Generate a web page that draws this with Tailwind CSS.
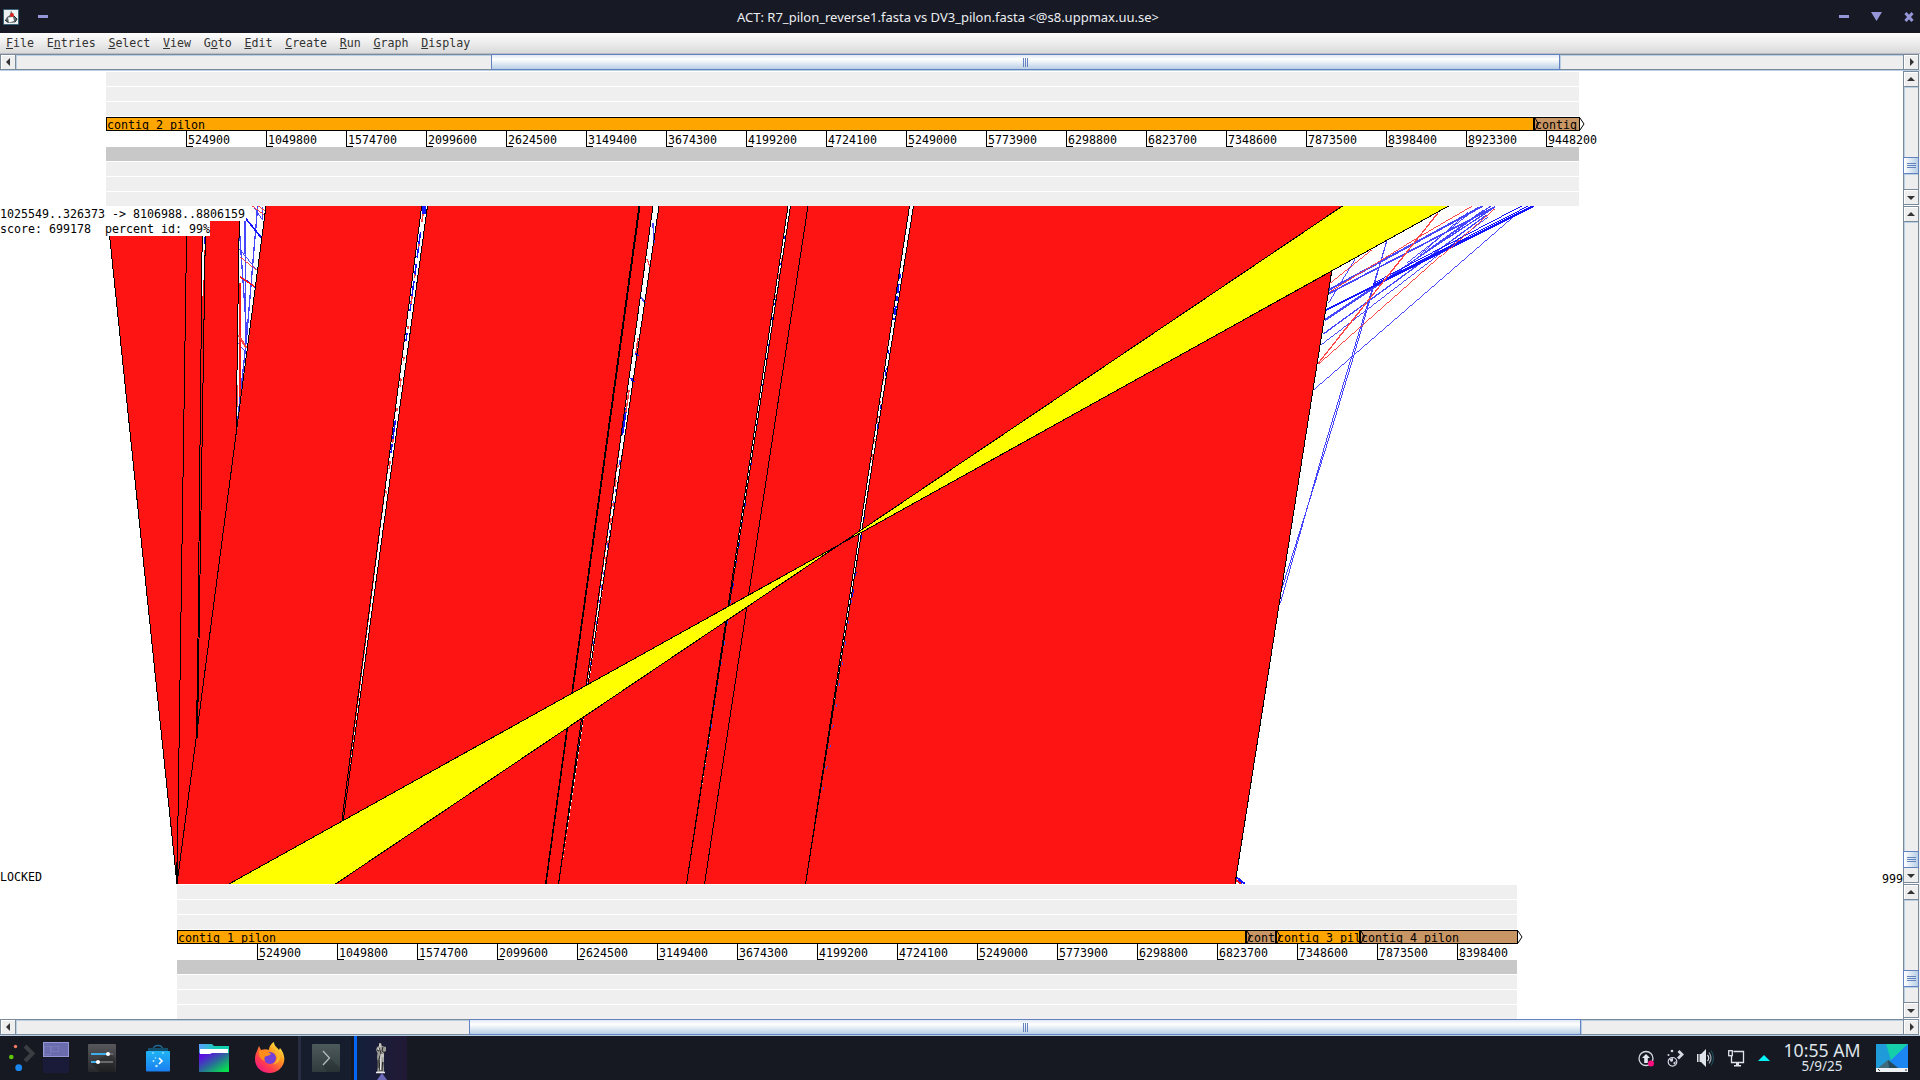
<!DOCTYPE html>
<html lang="en">
<head>
<meta charset="utf-8">
<title>ACT</title>
<script src="https://cdn.jsdelivr.net/npm/@tailwindcss/browser@4"></script>
</head>
<body class="w-[1920px] h-[1080px] overflow-hidden flex flex-col bg-white text-black font-['DejaVu_Sans_Mono',monospace] text-[11.63px] leading-[14px]">

<!-- title bar -->
<header class="h-[33px] shrink-0 bg-[#171924] flex items-center relative">
  <svg class="ml-[3px] w-4 h-4" viewBox="0 0 16 16"><rect width="16" height="16" rx="1" fill="#3b6477"/><rect x="1" y="1" width="14" height="14" fill="#edf1f2"/><path d="M8 1.500l2 4 3 3.500 1.500 1-2.500 3.500-7 .5-3-2.500 2-3.500 3-2z" fill="#5b686c"/><path d="M5 8.500l5-.5 1 4-5 1.500z" fill="#fff"/><path d="M11 7l3 3-2 3M2 11l3 2" stroke="#222b2e" fill="none"/><circle cx="9" cy="6" r="1.900" fill="#e0231d"/></svg>
  <div class="ml-[19px] w-[10px] h-[3px] bg-[#9496d8]"></div>
  <h1 class="absolute left-[736px] w-[424px] text-center whitespace-nowrap text-[13px] leading-[18px] top-[8px] text-[#eceef2] font-['Noto_Sans',sans-serif]">ACT: R7_pilon_reverse1.fasta vs DV3_pilon.fasta &lt;@s8.uppmax.uu.se&gt;</h1>
  <div class="ml-auto mr-[6px] flex items-center gap-[22px]">
    <div class="w-[10px] h-[3px] bg-[#9496d8]"></div>
    <svg class="w-[11px] h-[9px]" viewBox="0 0 11 9"><path d="M0 0h11l-5.500 9z" fill="#9496d8"/></svg>
    <svg class="w-[10px] h-[10px]" viewBox="0 0 10 10"><path d="M1.500 1l7 8M8.500 1l-7 8" stroke="#9496d8" stroke-width="3"/></svg>
  </div>
</header>

<!-- menu bar -->
<nav class="h-[21px] shrink-0 border-b border-[#b8bcc4] bg-gradient-to-b from-white to-[#dadada] text-[#333] flex items-center gap-[12.7px] pl-[6px] pb-px">
  <span><u>F</u>ile</span><span>E<u>n</u>tries</span><span><u>S</u>elect</span><span><u>V</u>iew</span><span>G<u>o</u>to</span><span><u>E</u>dit</span><span><u>C</u>reate</span><span><u>R</u>un</span><span><u>G</u>raph</span><span><u>D</u>isplay</span>
</nav>

<!-- upper horizontal scrollbar -->
<div class="h-[17px] shrink-0 flex border-b border-[#b8cfe5] bg-[#eee]">
  <div class="w-4 border border-[#7a8a99] flex items-center justify-center shadow-[inset_1px_1px_#fff]"><svg class="w-1 h-2" viewBox="0 0 4 8"><path d="M4 0v8L0 4z" fill="#333"/></svg></div>
  <div class="w-[475px] border-y border-[#7a8a99] shadow-[inset_1px_1px_#b8cfe5]"></div>
  <div class="w-[1069px] border border-[#6382bf] bg-gradient-to-b from-[#dfe9f3] via-white via-30% to-[#b8cfe5] flex items-center justify-center gap-px">
    <i class="w-px h-[9px] bg-[#6382bf]"></i><i class="w-px h-[9px] bg-[#6382bf]"></i><i class="w-px h-[9px] bg-[#6382bf]"></i>
  </div>
  <div class="w-[343px] border-y border-[#7a8a99] shadow-[inset_1px_1px_#b8cfe5]"></div>
  <div class="w-4 border border-[#7a8a99] flex items-center justify-center pl-px shadow-[inset_1px_1px_#fff]"><svg class="w-1 h-2" viewBox="0 0 4 8"><path d="M0 0v8l4-4z" fill="#333"/></svg></div>
</div>

<!-- subject sequence -->
<section class="h-[135px] shrink-0 flex">
  <div class="w-[1903px] pt-px pl-[106px]">
    <div class="w-[1473px]">
      <div class="h-[14px] mb-px bg-[#efefef]"></div>
      <div class="h-[14px] mb-px bg-[#efefef]"></div>
      <div class="h-[14px] mb-px bg-[#efefef]"></div>
      <div class="h-[14px] w-[1480px] flex">
        <div class="w-[1429px] border border-r-2 border-black bg-[#ffa500] overflow-hidden leading-[15px] whitespace-pre">contig 2 pilon</div>
        <div class="w-[45px] border border-l-0 border-black bg-[#c89664] overflow-hidden leading-[15px] relative whitespace-pre">contig<svg class="absolute left-0 top-0 w-[4px] h-3" viewBox="0 0 4 12"><path d="M0 0l3.500 6L0 12" fill="none" stroke="#000"/></svg></div>
        <svg class="w-[6px] h-[14px]" viewBox="0 0 6 14"><path d="M0 1l4 6-4 6" fill="none" stroke="#000"/></svg>
      </div>
      <div class="h-4 flex pl-[80px]" data-ruler="18"></div>
      <div class="h-[14px] mb-px bg-[#c8c8c8]"></div>
      <div class="h-[14px] mb-px bg-[#efefef]"></div>
      <div class="h-[14px] mb-px bg-[#efefef]"></div>
      <div class="h-[14px] bg-[#efefef]"></div>
    </div>
  </div>
  <div class="w-[17px] bg-[#eee] border-l border-[#7a8a99] pr-px flex flex-col">
    <div class="h-4 border-y border-r border-[#7a8a99] flex items-center justify-center shadow-[inset_1px_1px_#fff]"><svg class="w-2 h-1" viewBox="0 0 8 4"><path d="M4 0l4 4H0z" fill="#333"/></svg></div>
    <div class="h-[70px] border-r border-[#7a8a99] shadow-[inset_1px_1px_#b8cfe5]"></div>
    <div class="h-[17px] -ml-px border border-[#6382bf] bg-gradient-to-r from-white to-[#b8cfe5] flex flex-col items-center justify-center gap-px"><i class="w-[9px] h-px bg-[#6382bf]"></i><i class="w-[9px] h-px bg-[#6382bf]"></i><i class="w-[9px] h-px bg-[#6382bf]"></i></div>
    <div class="h-[15px] border-r border-[#7a8a99] shadow-[inset_1px_1px_#b8cfe5]"></div>
    <div class="h-4 pt-[2px] border-y border-r border-[#7a8a99] flex items-center justify-center shadow-[inset_1px_1px_#fff]"><svg class="w-2 h-1" viewBox="0 0 8 4"><path d="M0 0h8L4 4z" fill="#333"/></svg></div>
    <div class="h-px bg-white"></div>
  </div>
</section>

<!-- comparison view -->
<section class="h-[678px] shrink-0 flex">
  <div class="w-[1903px] relative">
    <svg class="w-[1903px] h-[678px] block" viewBox="0 206 1903 678" shape-rendering="crispEdges" fill="none">
      <!-- short matches to the right -->
      <g transform="translate(1220 200) scale(.33333)" stroke="#4646ff" stroke-width="3">
        <path d="M788 18L326 270" stroke-width="6"/><path d="M825 20L328 280" stroke-width="5"/>
        <path d="M822 22L315 358M812 18L520 225L315 362" stroke-width="3.500"/><path d="M800 45L310 402" stroke-width="4"/>
        <path d="M745 35L600 165M775 20L560 190M790 30L610 160M805 50L303 435M875 55L283 568M405 178L325 310M825 22L690 110L560 195"/>
        <path d="M500 124L398 460L315 735L181 1210M500 124L402 465L319 740L186 1165"/>
        <path d="M940 18L318 330" stroke="#1414ff" stroke-width="6"/>
        <path d="M925 18L460 255M905 18L700 125L460 250" stroke="#1414ff"/>
        <path d="M757 18L590 115L330 275M824 24L296 492M455 150L330 250" stroke="#ff4646"/>
        <path d="M653 40L293 492" stroke="#ff4646" stroke-width="4"/>
      </g>
      <path d="M1236 877l9 7M1236 880l6 4" stroke="#1414ff" stroke-width="2"/><path d="M1236 880l5 4" stroke="#ff1414" stroke-width="2"/>
      <path d="M106.500 206H1342L1235 884H177z" fill="#ff1414"/>
      <!-- wedge with inverted repeats -->
      <clipPath id="wedge"><path d="M239.500 206H266L236 437z"/></clipPath>
      <g clip-path="url(#wedge)"><path d="M230 206h40v240h-40z" fill="#fff"/>
        <g transform="translate(90 200) scale(.33333)" stroke="#4646ff" stroke-width="4">
          <path d="M465 50L467 460M503 18L470 410L440 690M449 100L470 400"/>
          <path d="M490 18L518 60M518 20V60M449 148L500 210M445 430L470 460" stroke-width="3"/>
          <path d="M463 50L517 117" stroke="#1414ff" stroke-width="5"/>
          <path d="M470 240L500 268M440 610V700" stroke="#1414ff"/>
          <path d="M449 170L502 212M487 18L527 48M505 18L527 34" stroke="#ff4646" stroke-width="3"/>
          <path d="M449 230L497 262M450 250V590" stroke="#ff1414" stroke-width="4"/>
          <path d="M445 405L470 445M442 555V620" stroke="#ff4646" stroke-width="6"/>
        </g>
      </g>
      <!-- gaps between collinear blocks -->
      <g fill="#fff">
        <path d="M203 206h3l-3 90h-1z"/><path d="M421.700 206h5.600L342.500 826z"/><path d="M653.300 206h5.700L563 860z"/><path d="M788 206h2.600L700 800z"/><path d="M909.700 206h4L822 780z"/>
      </g>
      <path d="M204.500 237v7M204.500 270v4M204.500 298v12" stroke="#1414ff" stroke-width="1"/><path d="M204.500 254v3M204.500 275v15" stroke="#ff4646"/>
      <g stroke="#4646ff" stroke-width="1.500">
        <path d="M424 206v8" stroke="#1414ff" stroke-width="4"/>
        <path d="M424 206L391 453" stroke="#1414ff" stroke-width="1.500" stroke-dasharray="10 16 26 6 14 4 30 22 8 80 20 4"/>
        <path d="M653 223l1 20M641 297l4 6"/><path d="M636 353l2 3M631 378l3 4M626 408L622 435" stroke="#1414ff" stroke-width="2.500"/>
        <path d="M620 460L600 600" stroke-dasharray="5 24 3 10"/>
        <path d="M785 236L731 600" stroke="#1414ff" stroke-width="1" stroke-dasharray="3 20 6 12"/>
        <path d="M900 274L894 320" stroke="#1414ff" stroke-dasharray="5 5 9 3" stroke-width="2"/><path d="M889 350L852 600" stroke="#1414ff" stroke-width="1" stroke-dasharray="4 14 8 30"/>
        <path d="M600 600L570 806M731 600L703 780M852 600L822 800" stroke-width="1" stroke-dasharray="3 18"/>
      </g>
      <g stroke="#ff4646" stroke-width="1.500">
        <path d="M423 214L385 500" stroke-dasharray="8 22 3 28 4 18"/><path d="M647 259l3 8M638 338l-2 15M629 390L626 412"/><path d="M618 465L602 590M782 258L775 300M891 326L887 350L872 460" stroke-dasharray="3 12 7 16"/>
      </g>
      <!-- block outlines -->
      <g stroke="#000" stroke-width="1">
        <path d="M106.500 206L177 884M187 206L177 884M202.500 206L197 735M205.800 206L197.500 735M239.500 206L236 437M266 206L177 884"/>
        <path d="M421.700 206L342 820M427.500 206L342.500 826M639 206L545.500 884M640 206L546 884M653 206L558.500 884M659 206L558.500 884M788 206L686.500 884M790.500 206L686.500 884M808 206L704.500 884M909.500 206L805.500 884M913.500 206L805.500 884"/>
        <path d="M1342 206L1235 884"/>
        <path d="M197 700v38M177 862v20" stroke-width="2"/>
      </g>
      <!-- selected match -->
      <path d="M1342.500 206H1448.500L229 884H335.500z" fill="#ff0"/>
      <path d="M1342.500 206L335.500 884M1448.500 206L229 884" stroke="#000"/>
    </svg>
    <div class="absolute left-0 top-0 h-[15px] w-[246px] bg-white whitespace-pre leading-[17px]">1025549..326373 -&gt; 8106988..8806159</div>
    <div class="absolute left-0 top-[15px] h-[15px] w-[210px] bg-white whitespace-pre leading-[17px]">score: 699178  percent id: 99%</div>
    <div class="absolute left-0 -bottom-px leading-[15px]">LOCKED</div>
    <div class="absolute right-0 -bottom-[3px] leading-[15px]">999</div>
  </div>
  <div class="w-[17px] bg-[#eee] border-l border-[#7a8a99] pr-px flex flex-col">
    <div class="h-4 border-y border-r border-[#7a8a99] flex items-center justify-center shadow-[inset_1px_1px_#fff]"><svg class="w-2 h-1" viewBox="0 0 8 4"><path d="M4 0l4 4H0z" fill="#333"/></svg></div>
    <div class="h-[629px] border-r border-[#7a8a99] shadow-[inset_1px_1px_#b8cfe5]"></div>
    <div class="h-[17px] -ml-px border border-[#6382bf] bg-gradient-to-r from-white to-[#b8cfe5] flex flex-col items-center justify-center gap-px"><i class="w-[9px] h-px bg-[#6382bf]"></i><i class="w-[9px] h-px bg-[#6382bf]"></i><i class="w-[9px] h-px bg-[#6382bf]"></i></div>
    <div class="h-[15px] pt-[2px] border-b border-r border-[#7a8a99] flex items-center justify-center"><svg class="w-2 h-1" viewBox="0 0 8 4"><path d="M0 0h8L4 4z" fill="#333"/></svg></div>
    <div class="h-px bg-white"></div>
  </div>
</section>

<!-- query sequence -->
<section class="h-[135px] shrink-0 flex">
  <div class="w-[1903px] pt-px pl-[177px]">
    <div class="w-[1340px]">
      <div class="h-[14px] mb-px bg-[#efefef]"></div>
      <div class="h-[14px] mb-px bg-[#efefef]"></div>
      <div class="h-[14px] mb-px bg-[#efefef]"></div>
      <div class="h-[14px] w-[1350px] flex">
        <div class="w-[1070px] border border-r-2 border-black bg-[#ffa500] overflow-hidden leading-[15px] whitespace-pre">contig 1 pilon</div>
        <div class="w-[30px] border border-r-2 border-l-0 border-black bg-[#c89664] overflow-hidden leading-[15px] relative whitespace-pre">cont<svg class="absolute left-0 top-0 w-[4px] h-3" viewBox="0 0 4 12"><path d="M0 0l3.500 6L0 12" fill="none" stroke="#000"/></svg></div>
        <div class="w-[84px] border border-r-2 border-l-0 border-black bg-[#ffa500] overflow-hidden leading-[15px] relative whitespace-pre">contig 3 pil<svg class="absolute left-0 top-0 w-[4px] h-3" viewBox="0 0 4 12"><path d="M0 0l3.500 6L0 12" fill="none" stroke="#000"/></svg></div>
        <div class="w-[157px] border border-l-0 border-black bg-[#c89664] overflow-hidden leading-[15px] relative whitespace-pre">contig 4 pilon<svg class="absolute left-0 top-0 w-[4px] h-3" viewBox="0 0 4 12"><path d="M0 0l3.500 6L0 12" fill="none" stroke="#000"/></svg></div>
        <svg class="w-[6px] h-[14px]" viewBox="0 0 6 14"><path d="M0 1l4 6-4 6" fill="none" stroke="#000"/></svg>
      </div>
      <div class="h-4 flex pl-[80px]" data-ruler="16"></div>
      <div class="h-[14px] mb-px bg-[#c8c8c8]"></div>
      <div class="h-[14px] mb-px bg-[#efefef]"></div>
      <div class="h-[14px] mb-px bg-[#efefef]"></div>
      <div class="h-[14px] bg-[#efefef]"></div>
    </div>
  </div>
  <div class="w-[17px] bg-[#eee] border-l border-[#7a8a99] pr-px flex flex-col">
    <div class="h-4 border-y border-r border-[#7a8a99] flex items-center justify-center shadow-[inset_1px_1px_#fff]"><svg class="w-2 h-1" viewBox="0 0 8 4"><path d="M4 0l4 4H0z" fill="#333"/></svg></div>
    <div class="h-[70px] border-r border-[#7a8a99] shadow-[inset_1px_1px_#b8cfe5]"></div>
    <div class="h-[17px] -ml-px border border-[#6382bf] bg-gradient-to-r from-white to-[#b8cfe5] flex flex-col items-center justify-center gap-px"><i class="w-[9px] h-px bg-[#6382bf]"></i><i class="w-[9px] h-px bg-[#6382bf]"></i><i class="w-[9px] h-px bg-[#6382bf]"></i></div>
    <div class="h-[15px] border-r border-[#7a8a99] shadow-[inset_1px_1px_#b8cfe5]"></div>
    <div class="h-4 pt-[2px] border-y border-r border-[#7a8a99] flex items-center justify-center shadow-[inset_1px_1px_#fff]"><svg class="w-2 h-1" viewBox="0 0 8 4"><path d="M0 0h8L4 4z" fill="#333"/></svg></div>
    <div class="h-px bg-white"></div>
  </div>
</section>

<!-- lower horizontal scrollbar -->
<div class="h-[17px] shrink-0 flex border-b border-[#b8cfe5] bg-[#eee]">
  <div class="w-4 border border-[#7a8a99] flex items-center justify-center shadow-[inset_1px_1px_#fff]"><svg class="w-1 h-2" viewBox="0 0 4 8"><path d="M4 0v8L0 4z" fill="#333"/></svg></div>
  <div class="w-[453px] border-y border-[#7a8a99] shadow-[inset_1px_1px_#b8cfe5]"></div>
  <div class="w-[1112px] border border-[#6382bf] bg-gradient-to-b from-[#dfe9f3] via-white via-30% to-[#b8cfe5] flex items-center justify-center gap-px">
    <i class="w-px h-[9px] bg-[#6382bf]"></i><i class="w-px h-[9px] bg-[#6382bf]"></i><i class="w-px h-[9px] bg-[#6382bf]"></i>
  </div>
  <div class="w-[322px] border-y border-[#7a8a99] shadow-[inset_1px_1px_#b8cfe5]"></div>
  <div class="w-4 border border-[#7a8a99] flex items-center justify-center pl-px shadow-[inset_1px_1px_#fff]"><svg class="w-1 h-2" viewBox="0 0 4 8"><path d="M0 0v8l4-4z" fill="#333"/></svg></div>
</div>

<!-- desktop panel -->
<footer class="h-[44px] shrink-0 bg-[#161922] flex items-stretch font-['Noto_Sans',sans-serif]">
  <svg class="w-[43px] h-[44px]" viewBox="0 0 43 44"><circle cx="15.500" cy="10.500" r="1.700" fill="#f27a62"/><circle cx="11.300" cy="21" r="2.300" fill="#5fc60a"/><circle cx="18.700" cy="31.700" r="3.400" fill="#1a86f0"/><path d="M25 10l7.500 7.500L25 25" fill="none" stroke="#3a3d42" stroke-width="4"/></svg>
  <div class="w-[26px] flex flex-col pt-[6px]">
    <div class="h-[15px] bg-[#6a6cae] border border-[#9496d8] flex"><div class="w-[7px] h-[9px] mt-[3px] border border-[#7779b9]"></div><div class="w-[8px] h-[6px] mt-[3px] border border-[#7779b9]"></div></div>
    <div class="h-[15px] mt-px bg-[#191b38]"></div>
  </div>
  <svg class="ml-[19px] mt-2 w-7 h-7" viewBox="0 0 28 28"><defs><linearGradient id="sg" x2="0" y2="1"><stop stop-color="#58585c"/><stop offset="1" stop-color="#27282b"/></linearGradient></defs><rect width="28" height="28" rx="1" fill="url(#sg)"/><path d="M3 19l9 9h15v-14l-5-5z" fill="#000" opacity=".2"/><path d="M3 10h17M3 18h7" stroke="#3daee9" stroke-width="2"/><path d="M20 10h5M10 18h15" stroke="#66686b" stroke-width="2"/><circle cx="20" cy="10" r="2" fill="#fff"/><circle cx="10" cy="18" r="2" fill="#fff"/></svg>
  <svg class="ml-[30px] mt-2 w-6 h-7" viewBox="0 0 24 28"><defs><linearGradient id="bg" x2="0" y2="1"><stop stop-color="#1fb4f5"/><stop offset="1" stop-color="#1a7ff0"/></linearGradient></defs><path d="M7 10V6c0-6 10-6 10 0v4" fill="none" stroke="#1d6d99" stroke-width="1.300"/><path d="M2 4h20v4H2z" fill="#14506e"/><rect y="7" width="24" height="20.500" rx="1" fill="url(#bg)"/><circle cx="7" cy="9" r="1" fill="#89d7ff"/><circle cx="17" cy="9" r="1" fill="#89d7ff"/><circle cx="9.500" cy="14" r=".8" fill="#bfe9ff"/><circle cx="7.500" cy="17" r="1" fill="#bfe9ff"/><circle cx="10.500" cy="22" r="1.200" fill="#bfe9ff"/><path d="M13 14l3 3-3 3" fill="none" stroke="#fff" stroke-width="1.600"/></svg>
  <svg class="ml-[29px] mt-2 w-[30px] h-7" viewBox="0 0 30 28"><defs><linearGradient id="fg" x2="1" y2="1"><stop offset=".15" stop-color="#5b10e0"/><stop offset=".5" stop-color="#2a6b9a"/><stop offset=".9" stop-color="#05e04e"/></linearGradient><linearGradient id="fh"><stop stop-color="#58a0ff"/><stop offset=".6" stop-color="#12cfae"/></linearGradient></defs><path d="M0 0h13l2 2h15v7H0z" fill="url(#fh)"/><rect y="9" width="30" height="19" fill="url(#fg)"/><path d="M1 5h28v4H13l-2 1H1z" fill="#fff"/></svg>
  <svg class="ml-[26px] mt-[6px] w-[30px] h-[31px]" viewBox="0 0 30 31"><defs><linearGradient id="ff" x1="1" x2=".2" y2="1"><stop offset=".1" stop-color="#fff24a"/><stop offset=".4" stop-color="#ff9a1f"/><stop offset=".75" stop-color="#ff3b4e"/><stop offset="1" stop-color="#f0158a"/></linearGradient></defs><path d="M2 9l2-5 2 4c3-1 6-1 8 0 0-4 3-7 5-8 0 4 3 5 5 8l1-2c4 5 5 10 4 14-2 7-8 11-14 11C6 31 0 25 0 17c0-4 1-6 2-8z" fill="url(#ff)"/><circle cx="15" cy="16" r="6" fill="#7540d8"/><path d="M4 9c4-2 7 1 11 2 2 1 0 2-3 3-3 0-3 3-2 5-4-1-7-5-6-10z" fill="#ff8d1c"/><path d="M19 10c5 3 4 10-1 12 7 0 9-7 5-12z" fill="#ffb52a"/></svg>
  <div class="ml-[13px] w-[3px] bg-[#282d42]"></div>
  <div class="w-[50px] bg-[#161e2d] pl-[11px] pt-2"><svg class="w-7 h-7" viewBox="0 0 28 28"><defs><linearGradient id="tg" x2="0" y2="1"><stop stop-color="#4d5a5b"/><stop offset="1" stop-color="#303b3e"/></linearGradient></defs><rect width="28" height="28" rx="1" fill="url(#tg)"/><path d="M18 14l10 10v4H15l-4-6z" fill="#000" opacity=".15"/><path d="M11 7l6.500 7L11 21" fill="none" stroke="#b5bcbc" stroke-width="1.300"/></svg></div>
  <div class="ml-[3px] w-[3px] bg-[#0566f5]"></div>
  <div class="w-[50px] bg-gradient-to-r from-[#131f3a] to-[#211936] pl-[17px] pt-[6px]"><svg class="w-4 h-[38px]" viewBox="0 0 16 38"><path d="M5 1h2l1 3 4 1v4l-2 1 0 6-.5 5 .5 5v4H3l.5-2V20L3 15l.5-4L2 8l1-3 2-1z" fill="#9b9a95"/><path d="M5 6l2 5-2 6 1 12M9 5l-1 4 3 2M9 15l-1 14M4 18v8M3 8l2 1" stroke="#26262a" fill="none"/><path d="M7 12l-.5 16M4 6l1 2M6 2v3M9 12v8" stroke="#f2f2ee" fill="none"/><path d="M2 30.500h9" stroke="#eee" stroke-width="1.500"/><path d="M3 38l5-7 5 7z" fill="#6c69b8"/></svg></div>
  <div class="flex-1"></div>
  <div class="flex items-center text-[#dfe3ea]">
    <svg class="w-[17px] h-[17px]" viewBox="0 0 17 17"><circle cx="8" cy="8.500" r="7" fill="none" stroke="#d3d8e3" stroke-width="1.300"/><path d="M8 4l4 4H9.800v5H6.200V8H4z" fill="#e4e8f0"/><circle cx="13" cy="13.500" r="3" fill="#ff0f7d"/></svg>
    <svg class="ml-[12px] w-[18px] h-[18px]" viewBox="0 0 18 18"><circle cx="5.500" cy="12.800" r="4.300" fill="none" stroke="#d3d8e3" stroke-width="1.200"/><path d="M2 10l4-1 0 3-2 1zM6 14l3-2-1 4z" fill="#d3d8e3"/><circle cx="5" cy="2" r="1.300" fill="#d3d8e3"/><circle cx="1.500" cy="6" r="1" fill="#d3d8e3"/><path d="M11.500 2l3.500 3.500-4 4" fill="none" stroke="#d3d8e3" stroke-width="2.800"/></svg>
    <svg class="ml-[12px] w-[18px] h-[18px]" viewBox="0 0 18 18"><path d="M0 5h1.500v8H0zM2.500 5H4l5-5v18l-5-5H2.500z" fill="#dfe3ea"/><path d="M10.500 6q2.500 3 0 6" fill="none" stroke="#dfe3ea" stroke-width="1.200"/><path d="M12 3.500q4 5.500 0 11" fill="none" stroke="#a3acb5" stroke-width="1.200"/><path d="M14 1.500q5 7.500 0 15" fill="none" stroke="#1d4e55" stroke-width="1.200"/></svg>
    <svg class="ml-[13px] w-[17px] h-[17px]" viewBox="0 0 17 17"><path d="M5.500 1.500h10v11H3.500V6" fill="none" stroke="#dfe3ea" stroke-width="1.300"/><rect x=".7" y=".7" width="3.600" height="5" fill="#161922" stroke="#dfe3ea" stroke-width="1.300"/><path d="M8 13h3v2h2v1.500H6V15h2z" fill="#dfe3ea"/></svg>
    <svg class="ml-[13px] w-3 h-[6px]" viewBox="0 0 12 6"><path d="M6 0l6 6H0z" fill="#07f2f6"/></svg>
    <div class="ml-[9px] w-[86px] flex flex-col items-center"><span class="text-[17.7px] leading-[20px] -mt-px">10:55 AM</span><span class="text-[13.5px] leading-[13px] pb-[3px]">5/9/25</span></div>
    <svg class="ml-[11px] mr-[12px] w-8 h-7" viewBox="0 0 32 28"><rect width="32" height="28" fill="#1796e0"/><path d="M0 0h32L15 17 0 28z" fill="#10b3c4"/><path d="M10 0h22L15 17z" fill="#15ceaa"/><path d="M0 0h10l5 17L0 26z" fill="#1e9bd8"/><path d="M32 0v24H20l-6-7z" fill="#1c86f2"/><path d="M2 24l10-8 10 8z" fill="#3f6a7c"/><path d="M12 16l10 8H13z" fill="#244a5b"/><rect y="24" width="32" height="4" fill="#eef2f4"/><path d="M2 25l2 2M29 26h2" stroke="#333"/></svg>
  </div>
</footer>

<script>
// base-position ticks, one every 524900 bases
document.querySelectorAll('[data-ruler]').forEach(function (el) {
  var html = '';
  for (var i = 1; i <= +el.dataset.ruler; i++) {
    html += '<div class="w-[80px] h-4 shrink-0 border-l border-black relative pl-px pt-px whitespace-nowrap leading-[17px]">' +
      i * 524900 + '<i class="absolute left-0 bottom-0 w-[6px] h-px bg-black"></i></div>';
  }
  el.innerHTML = html;
});
</script>
</body>
</html>
